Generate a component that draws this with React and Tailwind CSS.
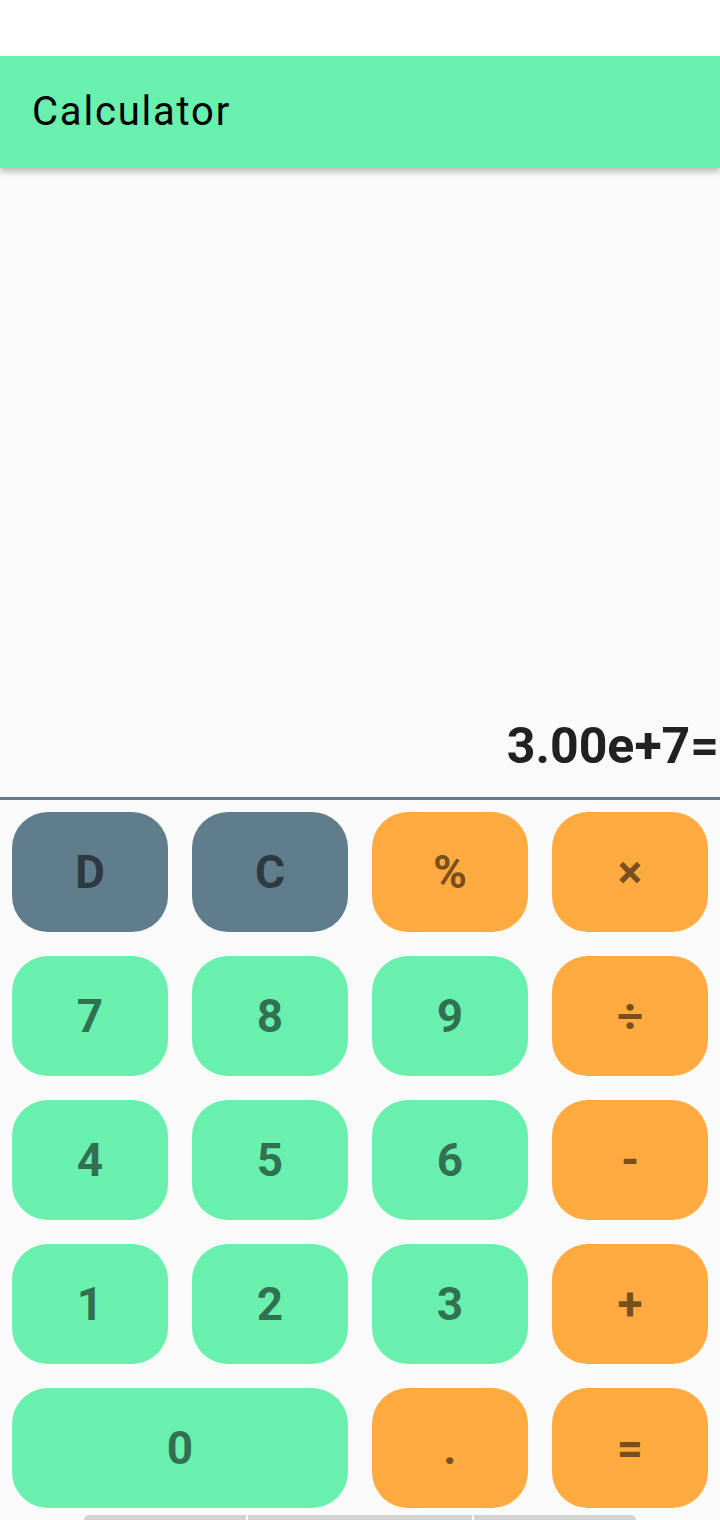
import React from "react";

const keys = [
  { label: "D", kind: "gray" },
  { label: "C", kind: "gray" },
  { label: "%", kind: "orange" },
  { label: "×", kind: "orange" },
  { label: "7", kind: "green" },
  { label: "8", kind: "green" },
  { label: "9", kind: "green" },
  { label: "÷", kind: "orange" },
  { label: "4", kind: "green" },
  { label: "5", kind: "green" },
  { label: "6", kind: "green" },
  { label: "-", kind: "orange" },
  { label: "1", kind: "green" },
  { label: "2", kind: "green" },
  { label: "3", kind: "green" },
  { label: "+", kind: "orange" },
  { label: "0", kind: "green", wide: true },
  { label: ".", kind: "orange" },
  { label: "=", kind: "orange" },
];

const kindClass = {
  gray: "bg-[#607d8b]",
  green: "bg-[#69f0ae]",
  orange: "bg-[#ffab40]",
};

const Key = ({ label, kind, wide }) => (
  <button
    className={`${kindClass[kind]} ${wide ? "col-span-2" : ""} h-[120px] rounded-[36px] flex items-center justify-center text-[46px] font-bold text-black/55`}
  >
    {label}
  </button>
);

const App = () => {
  return (
    <div
      className="h-[1520px] flex flex-col bg-[#fafafa] overflow-hidden"
      style={{ fontFamily: "Roboto, 'Noto Sans', sans-serif" }}
    >
      <div className="h-[56px] bg-white shrink-0"></div>
      <div className="h-[112px] shrink-0 bg-[#69f0ae] flex items-center pl-[32px] shadow-[0_4px_6px_rgba(0,0,0,0.25)] relative z-10">
        <h1 className="text-[40px] tracking-[1.8px] text-black">Calculator</h1>
      </div>

      <div className="flex-1 flex items-end justify-end pb-[19px]">
        <p className="text-[50px] font-bold leading-[64px] text-[#212121] pr-[1px]">3.00e+7=</p>
      </div>

      <div className="h-[3px] bg-[#607d8b] shrink-0"></div>

      <div className="shrink-0 p-[12px] pb-0 grid grid-cols-4 gap-[24px]">
        {keys.map((k) => (
          <Key key={k.label} {...k} />
        ))}
      </div>

      <div className="shrink-0 h-[12px] flex justify-center items-end">
        <div className="flex gap-[2px] w-[552px] h-[5px]">
          <div className="w-[162px] bg-[#d3d3d3] rounded-tl-full"></div>
          <div className="w-[224px] bg-[#d3d3d3]"></div>
          <div className="w-[162px] bg-[#d3d3d3] rounded-tr-full"></div>
        </div>
      </div>
    </div>
  );
};

export default App;
